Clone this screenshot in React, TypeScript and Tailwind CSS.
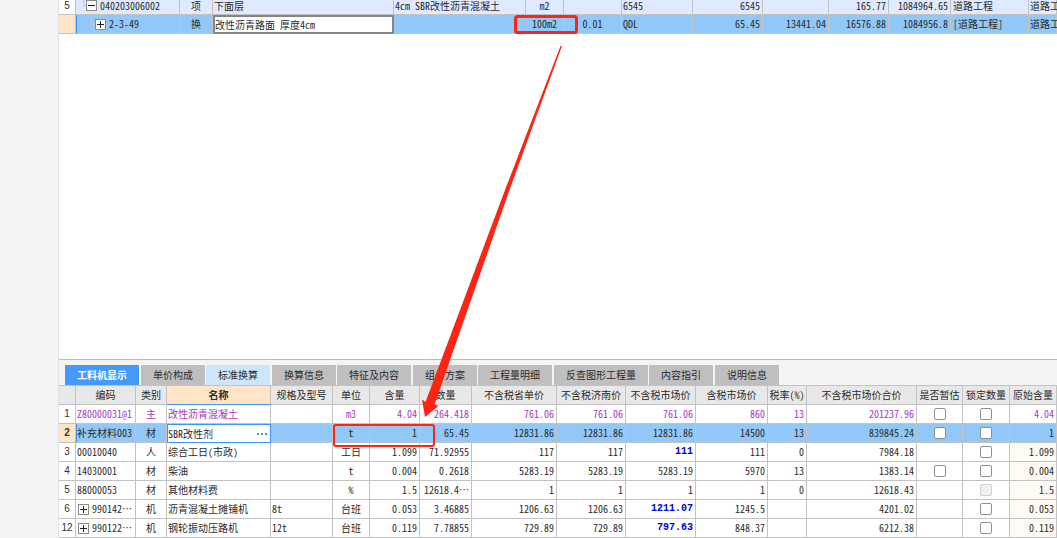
import type { ReactNode } from "react";

const FONT =
  "font-['Noto_Sans_Mono_CJK_SC','Noto_Sans_CJK_SC','Liberation_Mono',monospace]";

const LINE = "border-[#c3c3c3]";

function Toggle({ open, label }: { open?: boolean; label: string }) {
  return (
    <button
      type="button"
      aria-label={label}
      aria-expanded={!!open}
      className="flex size-[11px] shrink-0 items-center justify-center border border-[#8c8c8c] bg-white text-[#222]"
    >
      <svg viewBox="0 0 7 7" className="size-[7px]" stroke="currentColor" shapeRendering="crispEdges">
        <path d={open ? "M0 3.5H7" : "M0 3.5H7M3.5 0V7"} />
      </svg>
    </button>
  );
}

const TOP_COLS = [
  "w-[17px]", "w-[104px]", "w-[33px]", "w-[181px]", "w-[132px]", "w-[38px]", "w-[58px]",
  "w-[71px]", "w-[70px]", "w-[66px]", "w-[60px]", "w-[62px]", "w-[78px]", "w-[28px]",
];

const TOP_ALIGN = [
  "text-center", "text-left pl-px", "text-left pl-px", "text-center", "text-center",
  "text-left pl-px", "text-right pr-0.5", "text-right pr-0.5", "text-right pr-0.5",
  "text-right pr-0.5", "text-left pl-0.5", "text-left pl-px",
];

function TopCell({ children, align, className = "" }: { children?: ReactNode; align: string; className?: string }) {
  return <td className={`border-r border-b ${LINE} ${align} ${className}`}>{children}</td>;
}

function EstimateTable() {
  const first = ["项", "下面层", "4cm SBR改性沥青混凝土", "m2", "", "6545", "6545", "", "165.77", "1084964.65", "道路工程", "道路工程"];
  const second = ["换", "", "", "100m2", "0.01", "QDL", "65.45", "13441.04", "16576.88", "1084956.8", "[道路工程]", "道路工程"];
  return (
    <table className="w-full table-fixed border-separate border-spacing-0">
      <colgroup>
        {TOP_COLS.map((w, i) => <col key={i} className={w} />)}
      </colgroup>
      <tbody>
        <tr className="h-[15px] bg-[#dfe9ff] align-top leading-[11px]">
          <TopCell align="text-center" className="bg-white font-['Liberation_Sans',sans-serif]">5</TopCell>
          <TopCell align="text-left">
            <div className="flex pl-[7px]">
              <svg className="h-[11px] w-[3px]" viewBox="0 0 3 11" fill="none" stroke="#efc38d" shapeRendering="crispEdges">
                <path d="M0.5 0V5.5H3" />
              </svg>
              <Toggle open label="折叠 040203006002" />
              <span className="pl-[3px]">040203006002</span>
            </div>
          </TopCell>
          {first.map((v, i) => (
            <TopCell key={i} align={TOP_ALIGN[i]}>{v}</TopCell>
          ))}
        </tr>
        <tr className="bg-[#91c8f7]">
          <TopCell align="text-center" className="bg-[#ffe5c6]" />
          <TopCell align="text-left" className="border-l border-l-[#3d94f5]">
            <div className="flex items-center pl-3.5">
              <svg className="h-[18px] w-1" viewBox="0 0 4 18" fill="none" stroke="#e3c39a" shapeRendering="crispEdges">
                <path d="M0.5 0V9.5H4" />
              </svg>
              <Toggle label="展开 2-3-49" />
              <span className="pl-[3px]">2-3-49</span>
            </div>
          </TopCell>
          {second.map((v, i) =>
            i === 1 ? (
              <td key={i} className="p-0">
                <input
                  aria-label="名称"
                  defaultValue="改性沥青路面 厚度4cm"
                  className="block h-[19px] w-full border-2 border-[#858585] bg-white leading-[15px] outline-none"
                />
              </td>
            ) : (
              <TopCell key={i} align={TOP_ALIGN[i]}>{v}</TopCell>
            ),
          )}
        </tr>
      </tbody>
    </table>
  );
}

const TABS = ["工料机显示", "单价构成", "标准换算", "换算信息", "特征及内容", "组价方案", "工程量明细", "反查图形工程量", "内容指引", "说明信息"];

function Tabs() {
  return (
    <div role="tablist" className="flex pt-[5px] pl-1.5">
      {TABS.map((t, i) => (
        <button
          key={t}
          type="button"
          role="tab"
          aria-selected={i === 0}
          className={`h-5 shrink-0 rounded-t-[1px] px-3 ${i % 2 ? "mr-px" : "mr-0.5"} ${
            i === 0 ? "bg-[#4499fb] font-bold text-white" : i === 2 ? "bg-[#cce6ff]" : "bg-[#bfbfbf]"
          }`}
        >
          {t}
        </button>
      ))}
    </div>
  );
}

const COLS = [
  "w-[17px]", "w-[60px]", "w-[31px]", "w-[104px]", "w-[62px]", "w-[37px]", "w-[50px]", "w-[52px]", "w-[85px]",
  "w-[69px]", "w-[70px]", "w-[72px]", "w-[39px]", "w-[110px]", "w-[46px]", "w-[47px]", "w-[47px]",
];

const HEAD = ["", "编码", "类别", "名称", "规格及型号", "单位", "含量", "数量", "不含税省单价", "不含税济南价", "不含税市场价", "含税市场价", "税率(%)", "不含税市场价合价", "是否暂估", "锁定数量", "原始含量"];

type Box = "on" | "off" | "none";
type Row = {
  no: string;
  code: string;
  group?: boolean;
  kind: string;
  name: string;
  spec?: string;
  unit: string;
  nums: string[];
  blue?: boolean;
  est: Box;
  lock: Box;
  orig: string;
};

const ROWS: Row[] = [
  { no: "1", code: "Z80000031@1", kind: "主", name: "改性沥青混凝土", unit: "m3", nums: ["4.04", "264.418", "761.06", "761.06", "761.06", "860", "13", "201237.96"], est: "on", lock: "on", orig: "4.04" },
  { no: "2", code: "补充材料003", kind: "材", name: "SBR改性剂", unit: "t", nums: ["1", "65.45", "12831.86", "12831.86", "12831.86", "14500", "13", "839845.24"], est: "on", lock: "on", orig: "1" },
  { no: "3", code: "00010040", kind: "人", name: "综合工日(市政)", unit: "工日", nums: ["1.099", "71.92955", "117", "117", "111", "111", "0", "7984.18"], blue: true, est: "none", lock: "on", orig: "1.099" },
  { no: "4", code: "14030001", kind: "材", name: "柴油", unit: "t", nums: ["0.004", "0.2618", "5283.19", "5283.19", "5283.19", "5970", "13", "1383.14"], est: "on", lock: "on", orig: "0.004" },
  { no: "5", code: "88000053", kind: "材", name: "其他材料费", unit: "%", nums: ["1.5", "12618.4…", "1", "1", "1", "1", "0", "12618.43"], est: "none", lock: "off", orig: "1.5" },
  { no: "6", code: "990142…", group: true, kind: "机", name: "沥青混凝土摊铺机", spec: "8t", unit: "台班", nums: ["0.053", "3.46885", "1206.63", "1206.63", "1211.07", "1245.5", "", "4201.02"], blue: true, est: "none", lock: "on", orig: "0.053" },
  { no: "12", code: "990122…", group: true, kind: "机", name: "钢轮振动压路机", spec: "12t", unit: "台班", nums: ["0.119", "7.78855", "729.89", "729.89", "797.63", "848.37", "", "6212.38"], blue: true, est: "none", lock: "on", orig: "0.119" },
];

function Check({ state, label }: { state: Box; label: string }) {
  if (state === "none") return null;
  return (
    <input
      type="checkbox"
      aria-label={label}
      disabled={state === "off"}
      className="mx-auto block size-3 appearance-none rounded-[2px] border border-[#8f8f8f] bg-white disabled:border-[#d0d0d0] disabled:bg-[#f0f0f0]"
    />
  );
}

function ResourceTable() {
  const cell = `h-[19px] overflow-hidden whitespace-nowrap border-r border-b ${LINE}`;
  return (
    <table className="w-full table-fixed border-separate border-spacing-0 bg-white">
      <colgroup>
        {COLS.map((w, i) => <col key={i} className={w} />)}
      </colgroup>
      <thead>
        <tr className="bg-[#e8e8e8]">
          {HEAD.map((h, i) => (
            <th
              key={i}
              scope="col"
              className={`h-5 border-t border-r border-b whitespace-nowrap ${
                i === 3 ? "border-[#c3c3c3] border-b-[#3d94f5] bg-[#ffe5c6] font-bold" : "border-[#c3c3c3] font-normal"
              }`}
            >
              {h}
            </th>
          ))}
        </tr>
      </thead>
      <tbody>
        {ROWS.map((r, ri) => {
          const sel = ri === 1;
          return (
            <tr key={r.no} className={sel ? "bg-[#91c8f7]" : ri === 0 ? "text-[#a43ab8]" : ""}>
              <td className={`${cell} text-center font-['Liberation_Sans',sans-serif] text-[#333] ${sel ? "bg-[#ffe5c6] font-bold" : ""}`}>{r.no}</td>
              <td className={`${cell} ${sel ? "border-l border-l-[#3d94f5]" : "pl-px"}`}>
                {r.group ? (
                  <div className="flex items-center gap-[3px] pl-px">
                    <Toggle label={`展开 ${r.code}`} />
                    <span>{r.code}</span>
                  </div>
                ) : (
                  r.code
                )}
              </td>
              <td className={`${cell} text-center`}>{r.kind}</td>
              {sel ? (
                <td className="h-[19px] p-0">
                  <div className="flex h-[19px] border border-[#3d94f5] bg-white">
                    <input aria-label="名称" defaultValue={r.name} className="min-w-0 flex-1 outline-none" />
                    <button type="button" aria-label="选择材料" className="flex w-4 items-center justify-center text-[#3d94f5]">
                      <svg viewBox="0 0 10 2" className="h-0.5 w-2.5" fill="currentColor">
                        <path d="M0 0h2v2H0zM4 0h2v2H4zM8 0h2v2H8z" />
                      </svg>
                    </button>
                  </div>
                </td>
              ) : (
                <td className={`${cell} pl-px`}>{r.name}</td>
              )}
              <td className={`${cell} pl-px`}>{r.spec}</td>
              <td className={`${cell} text-center`}>{r.unit}</td>
              {r.nums.map((n, i) => (
                <td
                  key={i}
                  className={`${cell} pr-0.5 text-right ${
                    r.blue && i === 4 ? "font-['Liberation_Mono',monospace] font-bold text-[#0000e6]" : ""
                  }`}
                >
                  {n}
                </td>
              ))}
              <td className={cell}><Check state={r.est} label={`是否暂估 ${r.name}`} /></td>
              <td className={cell}><Check state={r.lock} label={`锁定数量 ${r.name}`} /></td>
              <td className={`${cell} pr-0.5 text-right ${ri > 1 ? "bg-[#fffaf4]" : ""}`}>{r.orig}</td>
            </tr>
          );
        })}
      </tbody>
    </table>
  );
}

export default function App() {
  return (
    <div lang="zh-CN" className={`relative flex h-screen overflow-hidden bg-[#f4f4f4] text-[10px] leading-[18px] text-[#2b2b2b] ${FONT}`}>
      <aside className="w-[58px] shrink-0" />
      <main className="flex min-w-0 flex-1 flex-col border-l border-[#e2e2e2]">
        <section className="min-h-0 flex-1 overflow-hidden bg-white whitespace-nowrap">
          <EstimateTable />
        </section>
        <section className="shrink-0 border-t border-[#bdbdbd]">
          <Tabs />
          <ResourceTable />
        </section>
      </main>
      <svg
        className="pointer-events-none absolute top-0 left-0"
        width="1057"
        height="538"
        viewBox="0 0 1057 538"
        fill="none"
        stroke="#fd2414"
        aria-hidden="true"
      >
        <rect x="515.5" y="16.5" width="61" height="16" rx="2" strokeWidth="3" />
        <rect x="334" y="425" width="100" height="21" rx="2" strokeWidth="2" />
        <path d="M560.500 46L505 190L425.500 402L422 399.500L425 417L438.500 406L434.500 404.500L509.500 190L562 46Z" fill="#fd2414" stroke="none" />
      </svg>
    </div>
  );
}
